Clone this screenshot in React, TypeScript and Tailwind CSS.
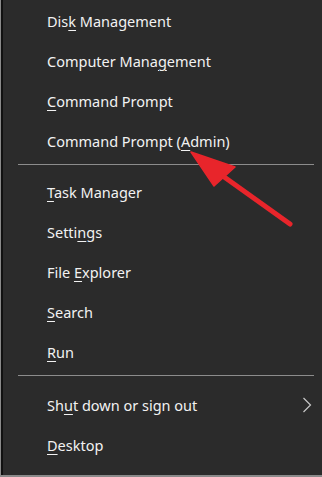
import React from "react";

type Item = { pre: string; u: string; post: string; chevron?: boolean };

const group1: Item[] = [
  { pre: "Dis", u: "k", post: " Management" },
  { pre: "Computer Mana", u: "g", post: "ement" },
  { pre: "", u: "C", post: "ommand Prompt" },
  { pre: "Command Prompt (", u: "A", post: "dmin)" },
];
const group2: Item[] = [
  { pre: "", u: "T", post: "ask Manager" },
  { pre: "Setti", u: "n", post: "gs" },
  { pre: "File ", u: "E", post: "xplorer" },
  { pre: "", u: "S", post: "earch" },
  { pre: "", u: "R", post: "un" },
];
const group3: Item[] = [
  { pre: "Sh", u: "u", post: "t down or sign out", chevron: true },
  { pre: "", u: "D", post: "esktop" },
];

function Row({ item }: { item: Item }) {
  return (
    <div className="flex h-10 items-center justify-between pl-[44px] pr-[9px]">
      <span className="text-[14.5px] text-[#f2f2f2] leading-none">
        {item.pre}
        <span className="underline underline-offset-[3px] decoration-1">{item.u}</span>
        {item.post}
      </span>
      {item.chevron && (
        <svg width="10" height="16" viewBox="0 0 10 16" className="mr-[1px]">
          <path d="M1.5 1 L8.5 8 L1.5 15" fill="none" stroke="#c8c8c8" strokeWidth="1.2" />
        </svg>
      )}
    </div>
  );
}

export default function App() {
  return (
    <div
      className="relative w-[322px] h-[477px] overflow-hidden bg-[#2b2b2b] border-l border-l-[#8a8a8a] border-b-2 border-b-[#8a8a8a]"
      style={{ fontFamily: '"Noto Sans", "Open Sans", sans-serif' }}
    >
      <div className="flex h-full flex-col border-l-2 border-l-[#111111] pt-[1px]">
        {group1.map((i) => (
          <Row key={i.pre + i.u} item={i} />
        ))}
        <div className="pt-[3px] pb-[7px] pl-[15px] pr-[8px]">
          <div className="h-px bg-[#8c8c8c]" />
        </div>
        {group2.map((i) => (
          <Row key={i.pre + i.u} item={i} />
        ))}
        <div className="pt-[3px] pb-[9px] pl-[15px] pr-[8px]">
          <div className="h-px bg-[#8c8c8c]" />
        </div>
        {group3.map((i) => (
          <Row key={i.pre + i.u} item={i} />
        ))}
      </div>
      <svg
        className="absolute left-0 top-0 pointer-events-none"
        width="322"
        height="477"
        viewBox="0 0 322 477"
      >
        <line x1="289" y1="224" x2="212" y2="169" stroke="#e8252b" strokeWidth="5" strokeLinecap="round" />
        <polygon points="190,152 234,167 213,186" fill="#e8252b" stroke="#e8252b" strokeWidth="1.5" strokeLinejoin="round" />
      </svg>
    </div>
  );
}
